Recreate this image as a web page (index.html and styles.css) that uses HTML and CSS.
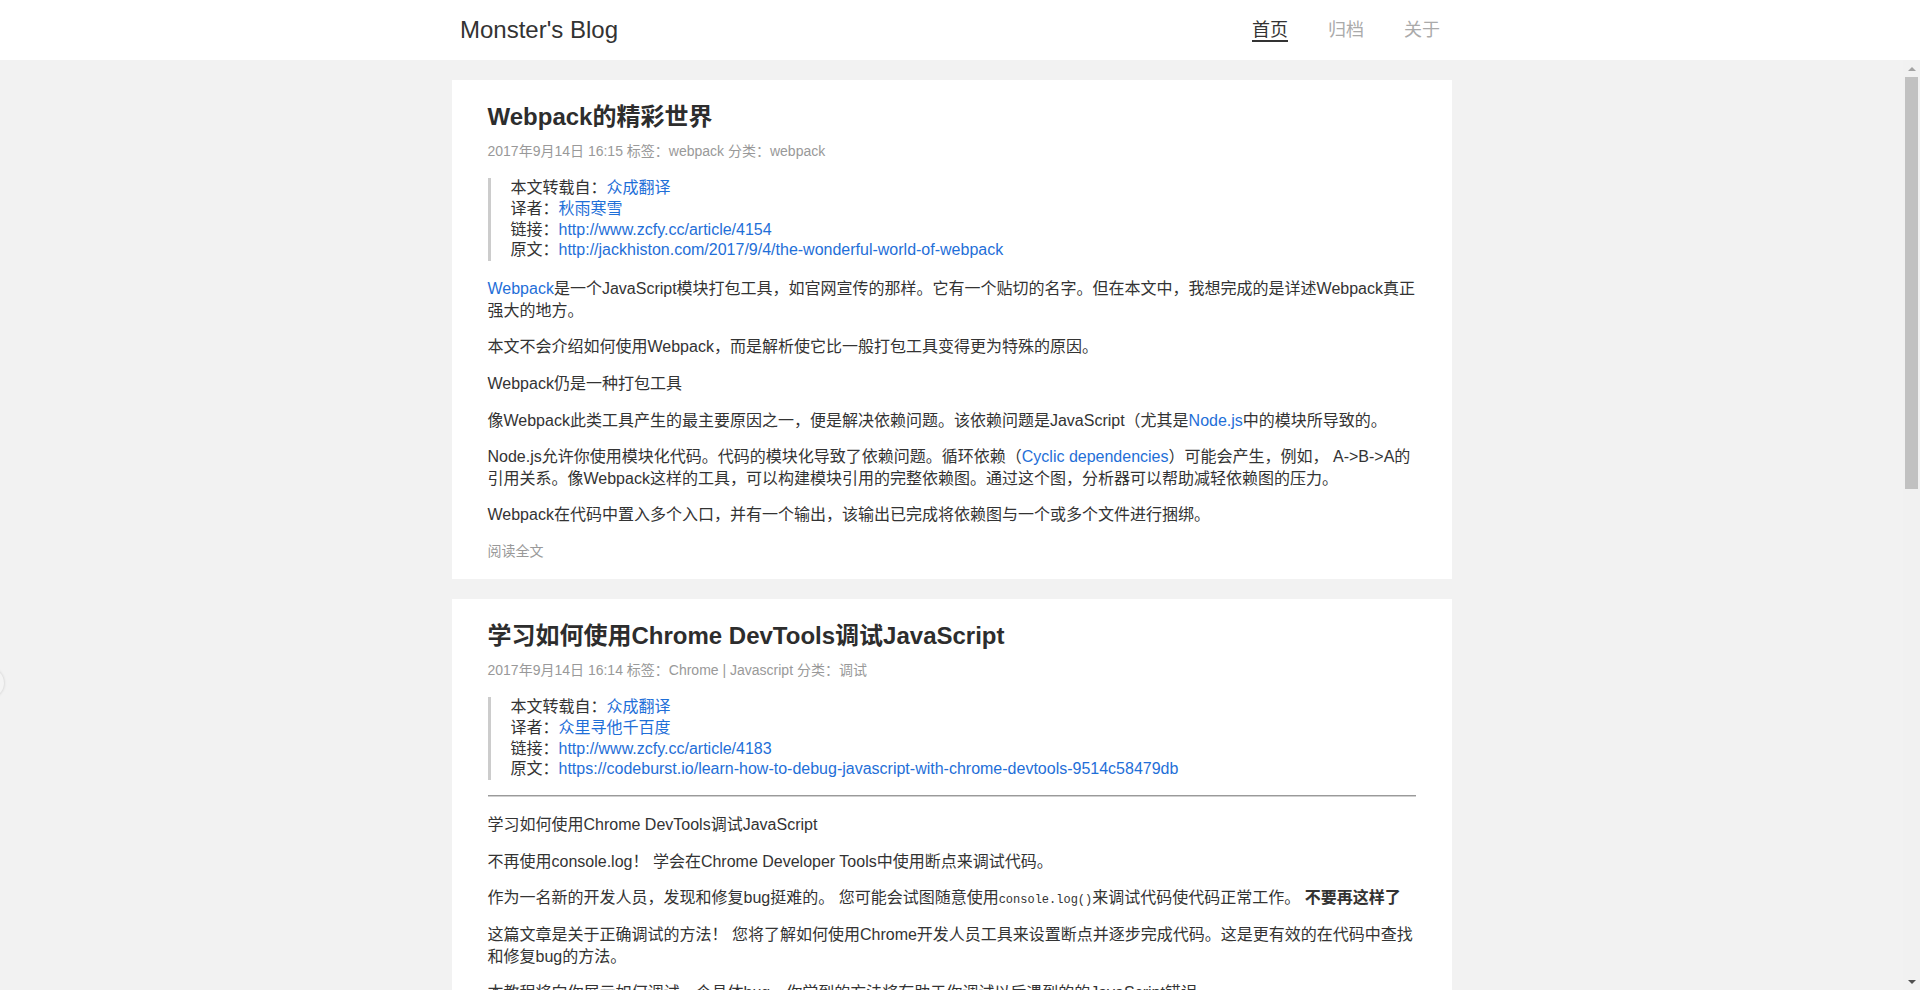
FILE: index.html
```html
<!DOCTYPE html>
<html lang="zh-CN">
<head>
<meta charset="utf-8">
<title>Monster's Blog</title>
<link rel="stylesheet" href="styles.css">
</head>
<body>
<header class="site-header">
  <div class="header-inner">
    <a class="logo" href="#">Monster's Blog</a>
    <nav class="nav">
      <a class="nav-link active" href="#">首页</a>
      <a class="nav-link" href="#">归档</a>
      <a class="nav-link" href="#">关于</a>
    </nav>
  </div>
</header>
<div class="main">
  <div class="scroller">
    <article class="post">
      <h2 class="post-title">Webpack的精彩世界</h2>
      <div class="post-meta">2017年9月14日 16:15 标签：webpack 分类：webpack</div>
      <blockquote class="quote">
        <div>本文转载自：<a href="#">众成翻译</a></div>
        <div>译者：<a href="#">秋雨寒雪</a></div>
        <div>链接：<a href="#">http://www.zcfy.cc/article/4154</a></div>
        <div>原文：<a href="#">http://jackhiston.com/2017/9/4/the-wonderful-world-of-webpack</a></div>
      </blockquote>
      <p><a href="#">Webpack</a>是一个JavaScript模块打包工具，如官网宣传的那样。它有一个贴切的名字。但在本文中，我想完成的是详述Webpack真正强大的地方。</p>
      <p>本文不会介绍如何使用Webpack，而是解析使它比一般打包工具变得更为特殊的原因。</p>
      <p>Webpack仍是一种打包工具</p>
      <p>像Webpack此类工具产生的最主要原因之一，便是解决依赖问题。该依赖问题是JavaScript（尤其是<a href="#">Node.js</a>中的模块所导致的。</p>
      <p>Node.js允许你使用模块化代码。代码的模块化导致了依赖问题。循环依赖（<a href="#">Cyclic dependencies</a>）可能会产生，例如， A-&gt;B-&gt;A的引用关系。像Webpack这样的工具，可以构建模块引用的完整依赖图。通过这个图，分析器可以帮助减轻依赖图的压力。</p>
      <p>Webpack在代码中置入多个入口，并有一个输出，该输出已完成将依赖图与一个或多个文件进行捆绑。</p>
      <a class="read-more" href="#">阅读全文</a>
    </article>
    <article class="post">
      <h2 class="post-title">学习如何使用Chrome DevTools调试JavaScript</h2>
      <div class="post-meta">2017年9月14日 16:14 标签：Chrome | Javascript 分类：调试</div>
      <blockquote class="quote tight">
        <div>本文转载自：<a href="#">众成翻译</a></div>
        <div>译者：<a href="#">众里寻他千百度</a></div>
        <div>链接：<a href="#">http://www.zcfy.cc/article/4183</a></div>
        <div>原文：<a href="#">https://codeburst.io/learn-how-to-debug-javascript-with-chrome-devtools-9514c58479db</a></div>
      </blockquote>
      <hr class="rule">
      <p>学习如何使用Chrome DevTools调试JavaScript</p>
      <p>不再使用console.log！ 学会在Chrome Developer Tools中使用断点来调试代码。</p>
      <p>作为一名新的开发人员，发现和修复bug挺难的。 您可能会试图随意使用<code class="code">console.log()</code>来调试代码使代码正常工作。 <strong>不要再这样了</strong></p>
      <p>这篇文章是关于正确调试的方法！ 您将了解如何使用Chrome开发人员工具来设置断点并逐步完成代码。这是更有效的在代码中查找和修复bug的方法。</p>
      <p>本教程将向你展示如何调试一个具体bug，你学到的方法将有助于你调试以后遇到的的JavaScript错误。</p>
    </article>
  </div>
  <div class="scrollbar">
    <div class="sb-btn"><span class="arrow-up"></span></div>
    <div class="sb-thumb"></div>
    <div class="sb-space"></div>
    <div class="sb-btn"><span class="arrow-down"></span></div>
  </div>
</div>
<div class="edge-bubble"></div>
</body>
</html>
```

FILE: styles.css
```css
html, body {
  margin: 0;
  padding: 0;
  height: 990px;
  overflow: hidden;
}

body {
  font-family: "Liberation Sans", Arial, "Noto Sans CJK SC", sans-serif;
  color: #333;
  background: #f2f2f2;
  display: flex;
  flex-direction: column;
}

a {
  text-decoration: none;
}

.site-header {
  height: 60px;
  background: #fff;
  flex: none;
}

.header-inner {
  width: 1000px;
  height: 60px;
  margin: 0 auto;
  display: flex;
  align-items: center;
  justify-content: space-between;
}

.logo {
  font-size: 24px;
  line-height: 60px;
  color: #333;
}

.nav {
  display: flex;
  gap: 40px;
  margin-right: 20px;
}

.nav-link {
  display: block;
  font-size: 18px;
  line-height: 20px;
  padding-top: 2px;
  color: #aaa;
  border-bottom: 2px solid transparent;
}

.nav-link.active {
  color: #333;
  border-bottom-color: #333;
}

.main {
  flex: 1;
  display: flex;
  min-height: 0;
}

.scroller {
  flex: 1;
  overflow: hidden;
  padding-top: 20px;
}

.post {
  box-sizing: border-box;
  width: 1000px;
  margin: 0 auto 20px;
  padding: 20px 36px 18px;
  background: #fff;
  font-size: 16px;
}

.post-title {
  margin: 0;
  font-size: 24px;
  line-height: 34px;
  font-weight: bold;
  color: #2d2d2d;
}

.post-meta {
  margin-top: 7px;
  font-size: 14px;
  line-height: 20px;
  color: #999;
}

.quote {
  margin: 17px 0 17px;
  padding-left: 20px;
  border-left: 3px solid #ccc;
  line-height: 20.8px;
}

.quote.tight {
  margin-bottom: 15px;
}

.post a {
  color: #1f6fd8;
}

.post p {
  margin: 15px 0;
  line-height: 21.6px;
}

.rule {
  height: 0;
  margin: 15px 0 17px;
  border: 0;
  border-top: 1px solid #9a9a9a;
  border-bottom: 1px solid #d0d0d0;
}

.code {
  font-family: "Liberation Mono", monospace;
  font-size: 12px;
  line-height: 1;
}

.post .read-more {
  display: block;
  margin-top: 15px;
  font-size: 14px;
  line-height: 20px;
  color: #999;
}

.scrollbar {
  width: 17px;
  flex: none;
  background: #f1f1f1;
  display: flex;
  flex-direction: column;
}

.sb-btn {
  height: 17px;
  display: flex;
  align-items: center;
  justify-content: center;
  flex: none;
}

.arrow-up {
  width: 0;
  height: 0;
  border-left: 4px solid transparent;
  border-right: 4px solid transparent;
  border-bottom: 4px solid #a3a3a3;
}

.arrow-down {
  width: 0;
  height: 0;
  border-left: 4px solid transparent;
  border-right: 4px solid transparent;
  border-top: 4px solid #505050;
}

.sb-thumb {
  height: 412px;
  margin: 0 2px;
  background: #c1c1c1;
  flex: none;
}

.sb-space {
  flex: 1;
}

.edge-bubble {
  position: absolute;
  left: -26px;
  top: 668px;
  width: 30px;
  height: 30px;
  border-radius: 50%;
  background: #f4f4f4;
  box-shadow: 0 0 3px rgba(0, 0, 0, 0.18);
}
```
